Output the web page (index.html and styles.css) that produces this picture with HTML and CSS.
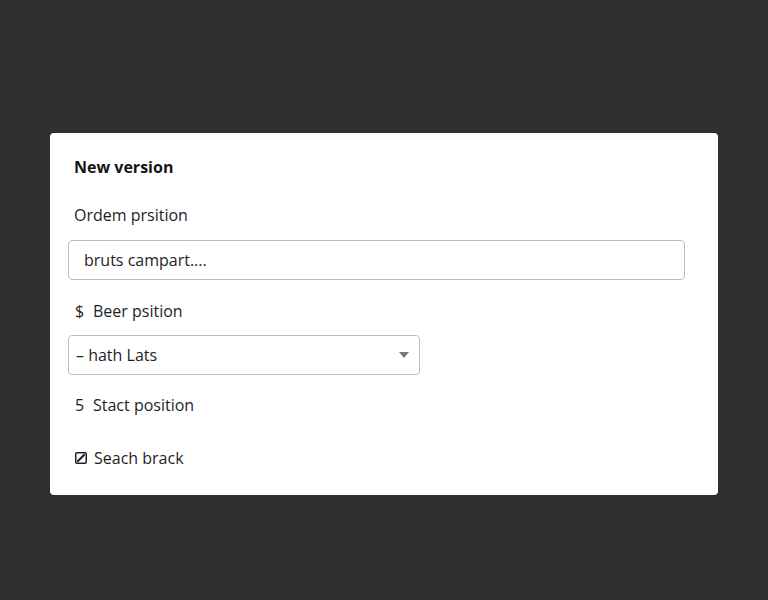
FILE: index.html
```html
<!DOCTYPE html>
<html>
<head>
<meta charset="utf-8">
<link rel="stylesheet" href="styles.css">
</head>
<body>
<div class="card">
  <div class="title">New version</div>
  <div class="label first">Ordem prsition</div>
  <div class="input">bruts campart....</div>
  <div class="label second"><span class="sym">$</span>Beer psition</div>
  <div class="select"><span>– hath Lats</span><span class="arrow"></span></div>
  <div class="label third"><span class="sym">5</span>Stact position</div>
  <div class="label check">
    <svg class="cb" width="12" height="12" viewBox="0 0 12 12"><rect x="0.75" y="0.75" width="10.5" height="10.5" rx="1" fill="none" stroke="#222" stroke-width="1.5"/><path d="M3 9 L9 3" stroke="#222" stroke-width="2.2" stroke-linecap="round"/></svg>
    Seach brack
  </div>
</div>
</body>
</html>
```
FILE: styles.css
```css
html, body {
  margin: 0;
  padding: 0;
}
body {
  background: #2f2f2f;
  width: 768px;
  height: 600px;
  overflow: hidden;
  font-family: "Open Sans", "Noto Sans", sans-serif;
  color: #1e1e1e;
}
.card {
  position: relative;
  margin: 133px 0 0 50px;
  width: 668px;
  height: 362px;
  box-sizing: border-box;
  background: #fff;
  border-radius: 4px;
  padding: 22px 33px 0 18px;
  display: flex;
  flex-direction: column;
}
.title {
  font-weight: 700;
  font-size: 16px;
  line-height: 24px;
  padding-left: 6px;
  color: #151515;
}
.label {
  font-size: 16px;
  line-height: 24px;
  padding-left: 6px;
  display: flex;
  align-items: center;
}
.label.first { margin-top: 24px; }
.label.second { margin-top: 19px; padding-left: 7px; }
.label.third { margin-top: 18px; padding-left: 7px; }
.label.check { margin-top: 29px; padding-left: 7px; }
.sym {
  width: 18px;
  font-size: 16px;
}
.cb {
  margin-right: 7px;
}
.input {
  margin-top: 13px;
  height: 40px;
  box-sizing: border-box;
  border: 1px solid #bdbdbd;
  border-radius: 4px;
  font-size: 16px;
  line-height: 38px;
  padding-left: 15px;
}
.select {
  margin-top: 12px;
  width: 352px;
  height: 40px;
  box-sizing: border-box;
  border: 1px solid #bdbdbd;
  border-radius: 4px;
  font-size: 16px;
  padding: 0 10px 0 7px;
  display: flex;
  align-items: center;
  justify-content: space-between;
}
.arrow {
  width: 0;
  height: 0;
  border-left: 5px solid transparent;
  border-right: 5px solid transparent;
  border-top: 6px solid #777;
}
```
